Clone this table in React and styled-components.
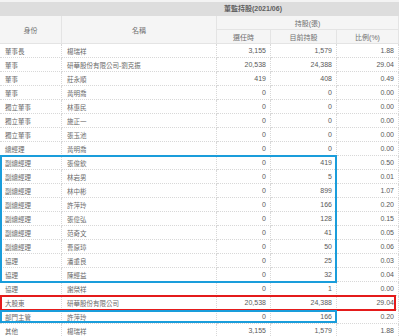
import React from "react";
import styled, { createGlobalStyle } from "styled-components";

const GlobalStyle = createGlobalStyle`
  html, body {
    margin: 0;
    padding: 0;
    background: #fff;
  }
  body {
    font-family: "Liberation Sans", "Noto Sans CJK TC", sans-serif;
    color: #666;
  }
`;

const COLS = "62px 155px 54px 66px 62px";

const Sheet = styled.div`
  display: grid;
  grid-template-columns: ${COLS};
  grid-template-rows: 16px 28px repeat(21, 14px);
  width: 399px;
`;

const TitleBand = styled.div`
  grid-row: 1;
  grid-column: 1 / -1;
  display: grid;
  grid-template-columns: ${COLS};
  background: #dddddd;
  border-top: 2px solid #f3f3f3;
  box-sizing: border-box;
`;

const TitleText = styled.div`
  grid-column: 3 / -1;
  padding-left: 7px;
  font-size: 7px;
  line-height: 13px;
  font-weight: bold;
  color: #606060;
`;

const Head = styled.div`
  grid-row: 2;
  grid-column: 1 / -1;
  display: grid;
  grid-template-columns: ${COLS};
  grid-template-rows: 14px 14px;
  background: #f5f5f5;
`;

const HeadCell = styled.div`
  grid-row: ${(p) => p.$row};
  grid-column: ${(p) => p.$col};
  display: flex;
  align-items: center;
  justify-content: center;
  font-size: 7px;
  color: #707070;
  border-right: 1px solid #e4e4e4;
  border-bottom: 1px solid #e4e4e4;
  box-sizing: border-box;
`;

const Row = styled.div`
  grid-row: ${(p) => p.$at};
  grid-column: 1 / -1;
  display: grid;
  grid-template-columns: ${COLS};
`;

const Cell = styled.div`
  display: flex;
  align-items: center;
  justify-content: ${(p) => (p.$num ? "flex-end" : "flex-start")};
  padding: ${(p) => (p.$num ? "0 4px 0 0" : "0 0 0 5px")};
  font-size: ${(p) => (p.$num ? "7px" : "6.5px")};
  color: ${(p) => (p.$num ? "#5a5a5a" : "#6a6a6a")};
  white-space: nowrap;
  border-right: 1px dotted #d8d8d8;
  border-bottom: 1px dotted #d8d8d8;
  box-sizing: border-box;
`;

const Highlight = styled.div`
  grid-row: ${(p) => p.$rows};
  grid-column: ${(p) => p.$cols};
  border: 2px solid ${(p) => p.$color};
  margin: ${(p) => p.$margin || "0"};
  z-index: 1;
  pointer-events: none;
`;

const rows = [
  ["董事長", "楊瑞祥", "3,155", "1,579", "1.88"],
  ["董事", "研華股份有限公司-劉克振", "20,538", "24,388", "29.04"],
  ["董事", "莊永順", "419", "408", "0.49"],
  ["董事", "黃明喬", "0", "0", "0.00"],
  ["獨立董事", "林惠民", "0", "0", "0.00"],
  ["獨立董事", "施正一", "0", "0", "0.00"],
  ["獨立董事", "張玉池", "0", "0", "0.00"],
  ["總經理", "黃明喬", "0", "0", "0.00"],
  ["副總經理", "張俊欽", "0", "419", "0.50"],
  ["副總經理", "林岩男", "0", "5", "0.01"],
  ["副總經理", "林中彬", "0", "899", "1.07"],
  ["副總經理", "許萍玲", "0", "166", "0.20"],
  ["副總經理", "張偉弘", "0", "128", "0.15"],
  ["副總經理", "范奇文", "0", "41", "0.05"],
  ["副總經理", "曹原璋", "0", "50", "0.06"],
  ["協理", "潘重良", "0", "25", "0.03"],
  ["協理", "陳經益", "0", "32", "0.04"],
  ["協理", "謝榮祥", "0", "1", "0.00"],
  ["大股東", "研華股份有限公司", "20,538", "24,388", "29.04"],
  ["部門主管", "許萍玲", "0", "166", "0.20"],
  ["其他", "楊瑞祥", "3,155", "1,579", "1.88"],
];

const FIRST = 3;

export default function App() {
  return (
    <>
      <GlobalStyle />
      <Sheet>
        <TitleBand>
          <TitleText>董監持股(2021/06)</TitleText>
        </TitleBand>
        <Head>
          <HeadCell $row="1 / 3" $col="1">身份</HeadCell>
          <HeadCell $row="1 / 3" $col="2">名稱</HeadCell>
          <HeadCell $row="1" $col="3 / 6">持股(張)</HeadCell>
          <HeadCell $row="2" $col="3">選任時</HeadCell>
          <HeadCell $row="2" $col="4">目前持股</HeadCell>
          <HeadCell $row="2" $col="5">比例(%)</HeadCell>
        </Head>
        {rows.map((r, i) => (
          <Row key={i} $at={FIRST + i}>
            <Cell>{r[0]}</Cell>
            <Cell>{r[1]}</Cell>
            <Cell $num>{r[2]}</Cell>
            <Cell $num>{r[3]}</Cell>
            <Cell $num>{r[4]}</Cell>
          </Row>
        ))}
        <Highlight
          $rows={`${FIRST + 8} / ${FIRST + 17}`}
          $cols="1 / 5"
          $color="#1a9ddb"
          $margin="-1px 0 -1px 0"
        />
        <Highlight
          $rows={`${FIRST + 18} / ${FIRST + 19}`}
          $cols="1 / 6"
          $color="#e41b1b"
          $margin="-1px 3px -1px 0"
        />
        <Highlight
          $rows={`${FIRST + 19} / ${FIRST + 20}`}
          $cols="1 / 5"
          $color="#1a9ddb"
          $margin="0 0 1px 0"
        />
      </Sheet>
    </>
  );
}
